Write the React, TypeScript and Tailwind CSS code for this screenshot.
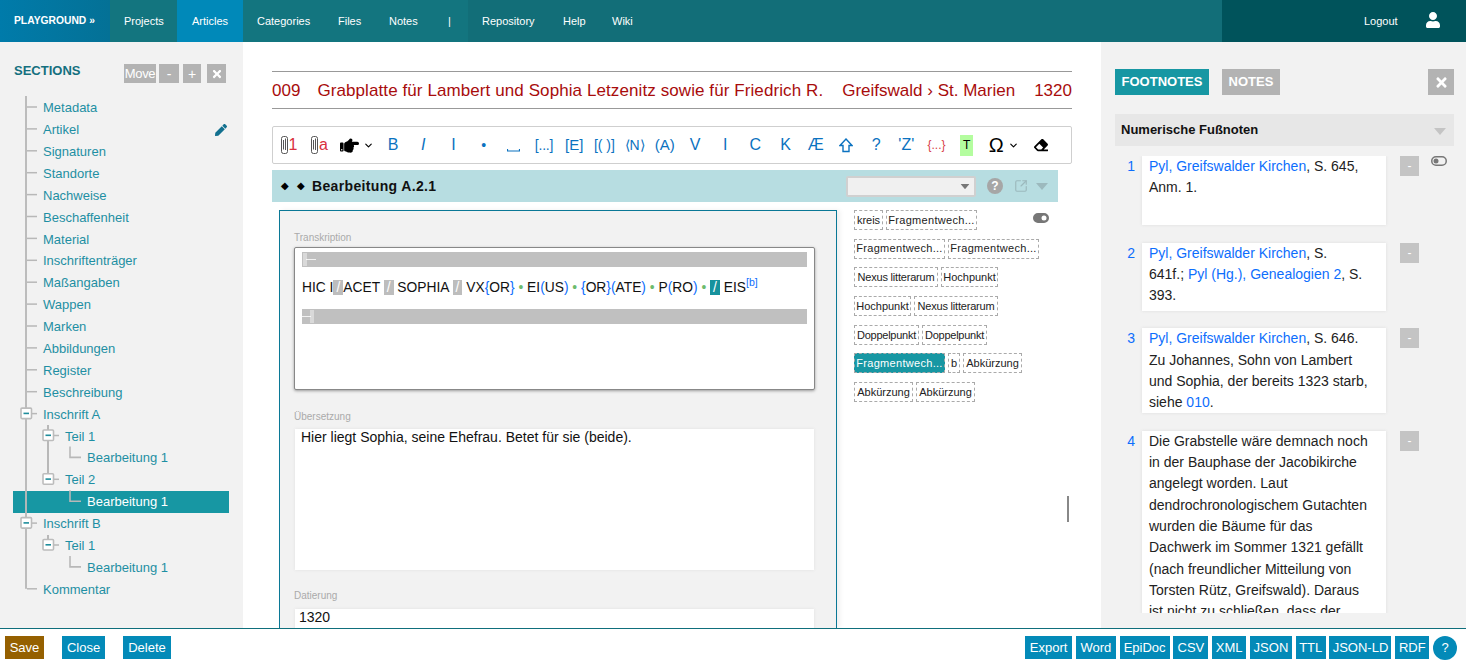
import React from "react";
import { FaHandPointRight, FaEraser, FaUser, FaPen, FaTimes } from "react-icons/fa";
import { ChevronDown, SquareArrowOutUpRight } from "lucide-react";

const Caret = ({ className }: { className: string }) => (
  <svg width="12" height="7" viewBox="0 0 12 7" className={className}>
    <polygon points="0,0 12,0 6,7" fill="currentColor" />
  </svg>
);

const Clip = () => (
  <svg width="7" height="18" viewBox="0 0 7 18" fill="none" stroke="#555" strokeWidth="1">
    <path d="M2.5 4V13.5M4.5 2.5V14" />
    <rect x="0.5" y="0.5" width="6" height="17" rx="2" />
  </svg>
);

const Toggle = ({ on }: { on: boolean }) => (
  <svg width="16" height="10" viewBox="0 0 16 10">
    <rect x="0.75" y="0.75" width="14.5" height="8.5" rx="4.25" fill={on ? "#777" : "none"} stroke="#777" strokeWidth="1.5" />
    <circle cx={on ? 11 : 5} cy="5" r="2.5" fill={on ? "#fff" : "#777"} />
  </svg>
);

function Nav({ t, className = "" }: { t: string; className?: string }) {
  return <div className={`px-[14px] flex items-center ${className}`}>{t}</div>;
}

const treeRows: [string, number][] = [
  ["Metadata", 0], ["Artikel", 0], ["Signaturen", 0], ["Standorte", 0], ["Nachweise", 0], ["Beschaffenheit", 0],
  ["Material", 0], ["Inschriftenträger", 0], ["Maßangaben", 0], ["Wappen", 0], ["Marken", 0], ["Abbildungen", 0],
  ["Register", 0], ["Beschreibung", 0], ["Inschrift A", 0], ["Teil 1", 1], ["Bearbeitung 1", 2], ["Teil 2", 1],
  ["Bearbeitung 1", 2], ["Inschrift B", 0], ["Teil 1", 1], ["Bearbeitung 1", 2], ["Kommentar", 0],
];

const rowY = (i: number) => 107 + 21.9 * i;

function TreeLines() {
  const c = "#b8b8b8";
  const boxes = [14, 15, 17, 19, 20];
  return (
    <svg className="absolute left-0 top-0 pointer-events-none overflow-visible" width="216" height="510" viewBox="13 97 216 510">
      <rect x="25" y="96" width="2" height={rowY(22) - 96} fill={c} opacity="0.95" />
      {treeRows.map(([, l], i) =>
        l === 0 ? <rect key={i} x="27" y={rowY(i) - 0.75} width="10" height="1.5" fill={c} /> : null
      )}
      <rect x="47" y="425" width="2" height="52" fill={c} />
      <rect x="47" y="535" width="2" height="8" fill={c} />
      {[15, 17, 20].map((i) => (
        <rect key={i} x="54" y={rowY(i) - 0.75} width="5" height="1.5" fill={c} />
      ))}
      {[16, 18, 21].map((i) => (
        <path key={i} d={`M70 ${rowY(i) - 11}V${rowY(i)}H81`} fill="none" stroke={c} strokeWidth="1.6" />
      ))}
      {boxes.map((i) => {
        const x = treeRows[i][1] === 0 ? 21 : 43;
        const y = rowY(i) - 5.5;
        return (
          <g key={i}>
            <rect x={x} y={y} width="10.5" height="10.5" rx="1" fill="#fff" stroke="#bcbcbc" strokeWidth="1.6" />
            <rect x={x + 2.5} y={y + 4.5} width="5.5" height="1.6" fill="#1f8d9c" />
          </g>
        );
      })}
    </svg>
  );
}

const toolBlue = "text-[#0b72c0]";

function Tool({ children, w = "w-[30.2px]", className = toolBlue }: { children: React.ReactNode; w?: string; className?: string }) {
  return <div className={`${w} shrink-0 flex items-center justify-center text-[16px] ${className}`}>{children}</div>;
}

function Toolbar() {
  return (
    <div className="mt-[17px] h-[38px] w-[800px] shrink-0 border border-[#cfcfcf] rounded-[2px] flex items-center pl-[1px] bg-white">
      <Tool w="w-[30px]" className="text-[#d9303e] gap-[1px]"><Clip /><span className="text-[16px]">1</span></Tool>
      <Tool w="w-[31px]" className="text-[#d9303e] gap-[1px]"><Clip /><span className="text-[16px]">a</span></Tool>
      <Tool w="w-[43px]" className="text-black gap-[4px]"><FaHandPointRight size={19} /><ChevronDown size={11} strokeWidth={2.5} /></Tool>
      <Tool>B</Tool>
      <Tool><span className="italic font-light">I</span></Tool>
      <Tool><span className="font-light">I</span></Tool>
      <Tool><span className="text-[14px]">•</span></Tool>
      <Tool>
        <svg width="13" height="6" viewBox="0 0 13 6" className="mt-[8px]"><path d="M0.5 3V5H12.5V3" fill="none" stroke="#0b72c0" strokeWidth="1.2" /></svg>
      </Tool>
      <Tool><span className="text-[14px] tracking-[-0.2px]">[...]</span></Tool>
      <Tool><span className="text-[15px]">[E]</span></Tool>
      <Tool><span className="text-[14px]">[( )]</span></Tool>
      <Tool><span className="text-[14px]">⟨N⟩</span></Tool>
      <Tool><span className="text-[15px]">(A)</span></Tool>
      <Tool>V</Tool>
      <Tool>I</Tool>
      <Tool>C</Tool>
      <Tool>K</Tool>
      <Tool>Æ</Tool>
      <Tool>
        <svg width="14" height="15" viewBox="0 0 14 15"><path d="M7 1L13 7.5H10V13.5H4V7.5H1Z" fill="none" stroke="#0b72c0" strokeWidth="1.4" /></svg>
      </Tool>
      <Tool>?</Tool>
      <Tool>'Z'</Tool>
      <Tool className="text-[#d9404a]"><span className="text-[12px]">{"{...}"}</span></Tool>
      <Tool className="text-black"><span className="bg-[#b4fd9f] w-[13px] h-[21px] text-[12px] flex items-center justify-center">T</span></Tool>
      <Tool w="w-[44px]" className="text-black gap-[4px]"><span className="text-[20px] leading-none">Ω</span><ChevronDown size={11} strokeWidth={2.5} /></Tool>
      <Tool className="text-black"><FaEraser size={14} /></Tool>
    </div>
  );
}

const Slash = ({ dark }: { dark?: boolean }) => (
  <span className={`px-[3px] text-white ${dark ? "bg-[#17929d]" : "bg-[#bdbdbd]"}`}>/</span>
);
const B = ({ children }: { children: React.ReactNode }) => <span className="text-[#0d6efd]">{children}</span>;
const Dot = () => <span className="text-[#6dbb6d]"> • </span>;

const F = "w-[91px] tracking-[0.3px]";
const H = "w-[57px]";
const N = "w-[84px] tracking-[-0.2px]";
const D = "w-[65px] tracking-[-0.25px]";
const A = "w-[59px]";

const chipRows: [string, string, boolean?][][] = [
  [["kreis", "w-[29px]"], ["Fragmentwech...", F]],
  [["Fragmentwech...", F], ["Fragmentwech...", F]],
  [["Nexus litterarum", N], ["Hochpunkt", H]],
  [["Hochpunkt", H], ["Nexus litterarum", N]],
  [["Doppelpunkt", D], ["Doppelpunkt", D]],
  [["Fragmentwech...", F, true], ["b", "w-[12px]"], ["Abkürzung", A]],
  [["Abkürzung", A], ["Abkürzung", A]],
];

function Chips() {
  return (
    <div className="relative ml-[17px] w-[200px] shrink-0 flex flex-col gap-[8.7px]">
      {chipRows.map((row, i) => (
        <div key={i} className="flex gap-[3px]">
          {row.map(([t, w, sel], j) => (
            <span
              key={j}
              className={`h-[20px] flex items-center justify-center text-[11px] border border-dashed border-[#aaa] whitespace-nowrap ${w} ${
                sel ? "bg-[#1797a3] text-white" : "text-[#222]"
              }`}
            >
              {t}
            </span>
          ))}
        </div>
      ))}
      <div className="absolute left-[179px] top-[3px]"><Toggle on /></div>
    </div>
  );
}

const L = ({ children }: { children: React.ReactNode }) => <a className="text-[#0d6efd]">{children}</a>;

function Foot({ n, h, children, toggle }: { n: number; h: string; children: React.ReactNode; toggle?: boolean }) {
  return (
    <div className="flex shrink-0">
      <div className="w-[20px] text-right text-[14px] leading-[21.33px] text-[#0d6efd]">{n}</div>
      <div className={`ml-[7px] w-[244px] px-[7px] bg-white text-[14px] leading-[21.33px] text-[#222] shadow-[0_0_3px_#dcdcdc] overflow-hidden whitespace-nowrap ${h}`}>
        {children}
      </div>
      <div className="ml-[14px] w-[19px] h-[20px] bg-[#c4c4c4] text-white text-[12px] flex items-center justify-center">-</div>
      {toggle && <div className="ml-[12px]"><Toggle on={false} /></div>}
    </div>
  );
}

const blueBtn = "h-[23px] bg-[#038ab8] text-white flex items-center justify-center text-[13px]";

export default function App() {
  return (
    <div className="h-[665px] w-[1466px] flex flex-col overflow-hidden bg-white font-['Liberation_Sans',Arial,sans-serif]">
      {/* header */}
      <header className="h-[42px] shrink-0 flex text-white text-[11px] bg-[#126e78]">
        <div className="w-[110px] pl-[14px] flex items-center font-bold text-[10.3px] bg-gradient-to-r from-[#007baa] to-[#047196]">PLAYGROUND »</div>
        <div className="flex bg-[#13757f] w-[358px]">
          <Nav t="Projects" className="w-[67px]" />
          <Nav t="Articles" className="bg-[#0089b9] w-[66px] !pl-[15px]" />
          <Nav t="Categories" className="w-[81px]" />
          <Nav t="Files" className="w-[51px]" />
          <Nav t="Notes" className="w-[59px]" />
          <Nav t="|" />
        </div>
        <div className="flex flex-1">
          <Nav t="Repository" className="w-[81px]" />
          <Nav t="Help" className="w-[49px]" />
          <Nav t="Wiki" />
        </div>
        <div className="w-[244px] bg-[#00535b] flex items-center pl-[142px]">
          <span>Logout</span>
          <FaUser size={16} className="ml-[27px] -mt-[2px]" />
        </div>
      </header>

      <div className="flex-1 min-h-0 flex">
        {/* sidebar */}
        <aside className="w-[243px] shrink-0 bg-[#f2f2f2] flex flex-col">
          <div className="h-[41px] mt-[22px] pl-[14px] pr-[17px] flex items-start">
            <span className="text-[13px] font-bold text-[#14707f] mt-[-3px]">SECTIONS</span>
            <div className="ml-auto flex text-white text-[14px] leading-none">
              <span className="w-[32px] h-[19px] bg-[#b3b3b3] flex items-center justify-center text-[13px] tracking-[-0.3px]">Move</span>
              <span className="ml-[3px] w-[20px] h-[19px] bg-[#b3b3b3] flex items-center justify-center">-</span>
              <span className="ml-[4px] w-[18px] h-[19px] bg-[#b3b3b3] flex items-center justify-center">+</span>
              <span className="ml-[6px] w-[19px] h-[19px] bg-[#b3b3b3] flex items-center justify-center"><FaTimes size={12} /></span>
            </div>
          </div>
          <div className="relative ml-[13px] w-[216px] mt-[-8px]">
            {treeRows.map(([t, l], i) => (
              <div
                key={i}
                className={`h-[21.9px] flex items-center text-[13px] ${
                  i === 18 ? "bg-[#1797a3] text-white" : "text-[#1e8fa3]"
                } ${l === 0 ? "pl-[30px]" : l === 1 ? "pl-[52px]" : "pl-[74px]"} ${i === 1 ? "justify-between pr-[2px]" : ""}`}
              >
                <span>{t}</span>
                {i === 1 && <FaPen size={12} className="text-[#12708f]" />}
              </div>
            ))}
            <TreeLines />
          </div>
        </aside>

        {/* main */}
        <main className="flex-1 min-w-0 pl-[29px] pt-[29px] flex flex-col relative">
          <div className="w-[800px] h-[38px] shrink-0 border-y border-[#999] flex items-center justify-between text-[17px] text-[#a80c0c] whitespace-nowrap pt-[1px]">
            <span>009</span>
            <span className="ml-[16px] tracking-[0.09px]">Grabplatte für Lambert und Sophia Letzenitz sowie für Friedrich R.</span>
            <span className="ml-[18px]">Greifswald › St. Marien</span>
            <span className="ml-[18px]">1320</span>
          </div>
          <Toolbar />
          <div className="mt-[6px] w-[786px] h-[32px] shrink-0 bg-[#b7dde1] flex items-center pl-[9px]">
            <span className="text-[10px] leading-none">◆</span>
            <span className="ml-[8px] text-[10px] leading-none">◆</span>
            <span className="ml-[7px] text-[14px] font-bold text-[#111] tracking-[0.35px]">Bearbeitung A.2.1</span>
            <div className="ml-auto w-[130px] h-[21px] bg-[#f0f0f0] border-2 border-[#d0d0d0] rounded-[2px] flex items-center justify-end pr-[3px]">
              <Caret className="text-[#777] scale-75" />
            </div>
            <div className="ml-[11px] w-[16px] h-[16px] rounded-full bg-[#a6a6a6] text-white text-[12px] font-bold flex items-center justify-center">?</div>
            <SquareArrowOutUpRight size={14} className="ml-[11px] text-[#9cb9bd]" strokeWidth={2} />
            <Caret className="ml-[8px] mr-[10px] text-[#9cb9bd]" />
          </div>

          <div className="flex flex-1 min-h-0 pt-[8px] overflow-hidden">
            <div className="ml-[7px] w-[558px] shrink-0 border border-b-0 border-[#0a7896] bg-[#f2f2f2] pl-[14px] pr-[21px] shadow-[3px_0_5px_#f0f0f0] overflow-hidden">
              <div className="mt-[21px] text-[10px] leading-[12px] text-[#aaa] h-[15px]">Transkription</div>
              <div className="w-[521px] h-[143px] bg-white border border-[#888] rounded-[2px] shadow-[0_1px_3px_#999] px-[7px] pt-[4px]">
                <div className="h-[15px] bg-[#c0c0c0] flex items-center px-[1px]">
                  <svg width="13" height="13" viewBox="0 0 13 13" fill="none" stroke="#fff" strokeWidth="0.8"><path d="M1 0V13M3 0V13M3 6.5H13" /></svg>
                </div>
                <div className="h-[42px] flex items-center text-[13.8px] text-[#111] whitespace-pre">
                  <span>
                    HIC I<Slash />ACET <Slash /> SOPHIA <Slash /> VX<B>{"{"}</B>OR<B>{"}"}</B><Dot />EI<B>(</B>US<B>)</B><Dot /><B>{"{"}</B>OR<B>{"}"}</B><B>(</B>ATE<B>)</B><Dot />P<B>(</B>RO<B>)</B><Dot /><Slash dark /> EIS<sup className="text-[#0d6efd] text-[10.5px]">[b]</sup>
                  </span>
                </div>
                <div className="h-[15px] bg-[#c0c0c0] flex items-center">
                  <svg width="13" height="13" viewBox="0 0 13 13" fill="none" stroke="#fff" strokeWidth="0.8"><path d="M0 6.5H9M9 0V13M11 0V13" /></svg>
                </div>
              </div>
              <div className="mt-[21px] text-[10px] leading-[12px] text-[#aaa] h-[18px]">Übersetzung</div>
              <div className="ml-[1px] w-[519px] h-[141px] bg-white shadow-[0_0_3px_#e0e0e0] px-[6px] text-[14px] leading-[16px] text-[#111]">
                Hier liegt Sophia, seine Ehefrau. Betet für sie (beide).
              </div>
              <div className="mt-[20px] text-[10px] leading-[12px] text-[#aaa] h-[19px]">Datierung</div>
              <div className="ml-[1px] w-[519px] h-[40px] bg-white shadow-[0_0_3px_#e0e0e0] px-[4px] text-[14px] leading-[16px] text-[#111]">1320</div>
            </div>
            <Chips />
          </div>
          <div className="absolute left-[824px] top-[454px] w-[2px] h-[26px] bg-[#888]" />
        </main>

        {/* right */}
        <aside className="w-[365px] shrink-0 bg-[#f2f2f2] pl-[14px] pr-[12px] pt-[27px] pb-[15px] flex flex-col">
          <div className="flex shrink-0 text-white text-[13px] font-bold h-[26px]">
            <span className="w-[94px] bg-[#1797a3] flex items-center justify-center">FOOTNOTES</span>
            <span className="ml-[13px] w-[58px] bg-[#b3b3b3] flex items-center justify-center">NOTES</span>
            <span className="ml-auto w-[26px] bg-[#b3b3b3] flex items-center justify-center"><FaTimes size={15} /></span>
          </div>
          <div className="mt-[19px] h-[32px] shrink-0 bg-[#e7e7e7] flex items-center justify-between pl-[6px] pr-[8px]">
            <span className="text-[13px] font-bold text-[#111]">Numerische Fußnoten</span>
            <Caret className="text-[#c4c4c4] mt-[3px]" />
          </div>
          <div className="mt-[10px] flex-1 min-h-0 overflow-hidden flex flex-col gap-[17.6px]">
            <Foot n={1} h="h-[69px]" toggle>
              <L>Pyl, Greifswalder Kirchen</L>, S. 645,<br />Anm. 1.
            </Foot>
            <Foot n={2} h="h-[68px]">
              <L>Pyl, Greifswalder Kirchen</L>, S.<br />641f.; <L>Pyl (Hg.), Genealogien 2</L>, S.<br />393.
            </Foot>
            <Foot n={3} h="h-[85px]">
              <L>Pyl, Greifswalder Kirchen</L>, S. 646.<br />Zu Johannes, Sohn von Lambert<br />und Sophia, der bereits 1323 starb,<br />siehe <L>010</L>.
            </Foot>
            <Foot n={4} h="h-[260px]">
              Die Grabstelle wäre demnach noch<br />in der Bauphase der Jacobikirche<br />angelegt worden. Laut<br />dendrochronologischem Gutachten<br />wurden die Bäume für das<br />Dachwerk im Sommer 1321 gefällt<br />(nach freundlicher Mitteilung von<br />Torsten Rütz, Greifswald). Daraus<br />ist nicht zu schließen, dass der
            </Foot>
          </div>
        </aside>
      </div>

      {/* footer */}
      <footer className="h-[37px] shrink-0 border-t border-[#0f6f7c] flex items-start pt-[7px] pl-[5px] pr-[9px]">
        <span className={`${blueBtn} w-[39px] !bg-[#956000]`}>Save</span>
        <span className={`${blueBtn} ml-[18px] w-[43px]`}>Close</span>
        <span className={`${blueBtn} ml-[18px] w-[48px]`}>Delete</span>
        <div className="ml-auto flex items-start gap-[3.78px]">
          <span className={`${blueBtn} w-[47px]`}>Export</span>
          <span className={`${blueBtn} w-[40px]`}>Word</span>
          <span className={`${blueBtn} w-[50px]`}>EpiDoc</span>
          <span className={`${blueBtn} w-[35px]`}>CSV</span>
          <span className={`${blueBtn} w-[34px]`}>XML</span>
          <span className={`${blueBtn} w-[42px]`}>JSON</span>
          <span className={`${blueBtn} w-[30px]`}>TTL</span>
          <span className={`${blueBtn} w-[62px]`}>JSON-LD</span>
          <span className={`${blueBtn} w-[34px]`}>RDF</span>
          <span className={`${blueBtn} w-[24px] !h-[24px] rounded-full`}>?</span>
        </div>
      </footer>
    </div>
  );
}
